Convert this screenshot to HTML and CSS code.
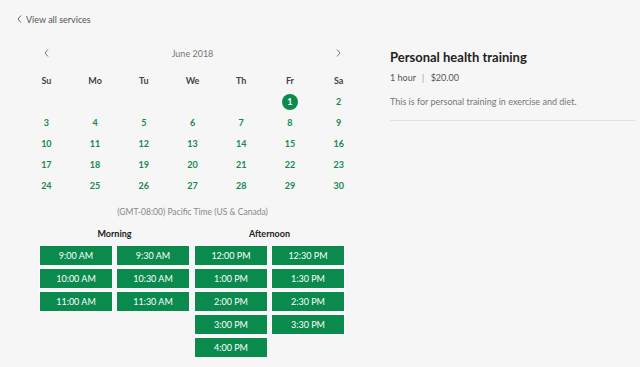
FILE: index.html
```html
<!doctype html>
<html>
<head>
    <meta charset="utf-8">
    <title>Book an appointment</title>
    <link rel="stylesheet" href="styles.css">
</head>
<body>
<div class="page">
    <div class="left">
        <a class="back" href="#">
            <svg class="chev" width="5" height="8" viewBox="0 0 5 8"><polyline points="4,0.5 1,4 4,7.5" fill="none" stroke="#666" stroke-width="1"/></svg>
            View all services
        </a>

        <div class="calendar">
            <div class="month">
                <svg class="chev" width="5" height="8" viewBox="0 0 5 8"><polyline points="4,0.5 1,4 4,7.5" fill="none" stroke="#777" stroke-width="1"/></svg>
                <span>June 2018</span>
                <svg class="chev" width="5" height="8" viewBox="0 0 5 8"><polyline points="1,0.5 4,4 1,7.5" fill="none" stroke="#777" stroke-width="1"/></svg>
            </div>
            <div class="grid">
                <div class="wd">Su</div><div class="wd">Mo</div><div class="wd">Tu</div><div class="wd">We</div><div class="wd">Th</div><div class="wd">Fr</div><div class="wd">Sa</div>
                <div></div><div></div><div></div><div></div><div></div>
                <div class="day"><span class="sel">1</span></div><div class="day">2</div>
                <div class="day">3</div><div class="day">4</div><div class="day">5</div><div class="day">6</div><div class="day">7</div><div class="day">8</div><div class="day">9</div>
                <div class="day">10</div><div class="day">11</div><div class="day">12</div><div class="day">13</div><div class="day">14</div><div class="day">15</div><div class="day">16</div>
                <div class="day">17</div><div class="day">18</div><div class="day">19</div><div class="day">20</div><div class="day">21</div><div class="day">22</div><div class="day">23</div>
                <div class="day">24</div><div class="day">25</div><div class="day">26</div><div class="day">27</div><div class="day">28</div><div class="day">29</div><div class="day">30</div>
            </div>
            <div class="tz">(GMT-08:00) Pacific Time (US &amp; Canada)</div>

            <div class="slots">
                <div class="group">
                    <div class="group-title">Morning</div>
                    <div class="times">
                        <button>9:00 AM</button><button>9:30 AM</button>
                        <button>10:00 AM</button><button>10:30 AM</button>
                        <button>11:00 AM</button><button>11:30 AM</button>
                    </div>
                </div>
                <div class="group">
                    <div class="group-title">Afternoon</div>
                    <div class="times">
                        <button>12:00 PM</button><button>12:30 PM</button>
                        <button>1:00 PM</button><button>1:30 PM</button>
                        <button>2:00 PM</button><button>2:30 PM</button>
                        <button>3:00 PM</button><button>3:30 PM</button>
                        <button>4:00 PM</button>
                    </div>
                </div>
            </div>
        </div>
    </div>

    <div class="right">
        <h1 class="title">Personal health training</h1>
        <div class="meta">1 hour <span class="sep">|</span> $20.00</div>
        <p class="desc">This is for personal training in exercise and diet.</p>
    </div>
</div>
</body>
</html>
```

FILE: styles.css
```css
body {
    margin: 0;
    background: #f6f6f6;
    font-family: Lato, "Liberation Sans", sans-serif;
    color: #333;
}

.page {
    display: flex;
    gap: 28px;
    padding: 12px 4px 0 17px;
}

.left {
    width: 345px;
    flex-shrink: 0;
}

.back {
    display: flex;
    align-items: center;
    gap: 4px;
    height: 14px;
    font-size: 9px;
    color: #555;
    text-decoration: none;
}

.calendar {
    width: 341px;
    margin-left: 5px;
}

.month {
    display: flex;
    justify-content: space-between;
    align-items: center;
    margin-top: 19px;
    height: 16px;
    padding: 0 22px;
    font-size: 9px;
    color: #777;
}

.grid {
    display: grid;
    grid-template-columns: repeat(7, 1fr);
    grid-auto-rows: 21px;
    margin-top: 9px;
}

.grid > div {
    display: flex;
    align-items: center;
    justify-content: center;
    font-size: 9px;
    font-weight: bold;
}

.wd {
    color: #444;
}

.day {
    color: #148a4f;
}

.sel {
    display: flex;
    align-items: center;
    justify-content: center;
    width: 16px;
    height: 16px;
    border-radius: 50%;
    background: #0b8a4e;
    color: #fff;
}

.tz {
    margin-top: 9px;
    line-height: 14px;
    text-align: center;
    font-size: 8.5px;
    color: #888;
}

.slots {
    display: flex;
    justify-content: center;
    gap: 4px;
    margin-top: 8px;
    padding-right: 1px;
}

.group-title {
    line-height: 14px;
    text-align: center;
    font-size: 9px;
    font-weight: bold;
    color: #222;
}

.times {
    display: grid;
    grid-template-columns: 74px 74px;
    gap: 2px 3px;
    margin-top: 4px;
}

.times button {
    height: 21px;
    padding: 0;
    border: 1px solid #fbfbfb;
    background: #0b8a4e;
    color: #fff;
    font-family: inherit;
    font-size: 9px;
}

.right {
    flex: 1;
    padding-top: 36px;
}

.title {
    margin: 0;
    line-height: 18px;
    font-size: 13px;
    font-weight: bold;
    color: #222;
}

.meta {
    margin-top: 5px;
    line-height: 14px;
    font-size: 9px;
    color: #555;
}

.sep {
    margin: 0 4px;
    color: #999;
}

.desc {
    margin: 10px 0 0;
    padding-bottom: 11px;
    border-bottom: 1px solid #e2e2e2;
    line-height: 14px;
    font-size: 9px;
    color: #777;
}
```
